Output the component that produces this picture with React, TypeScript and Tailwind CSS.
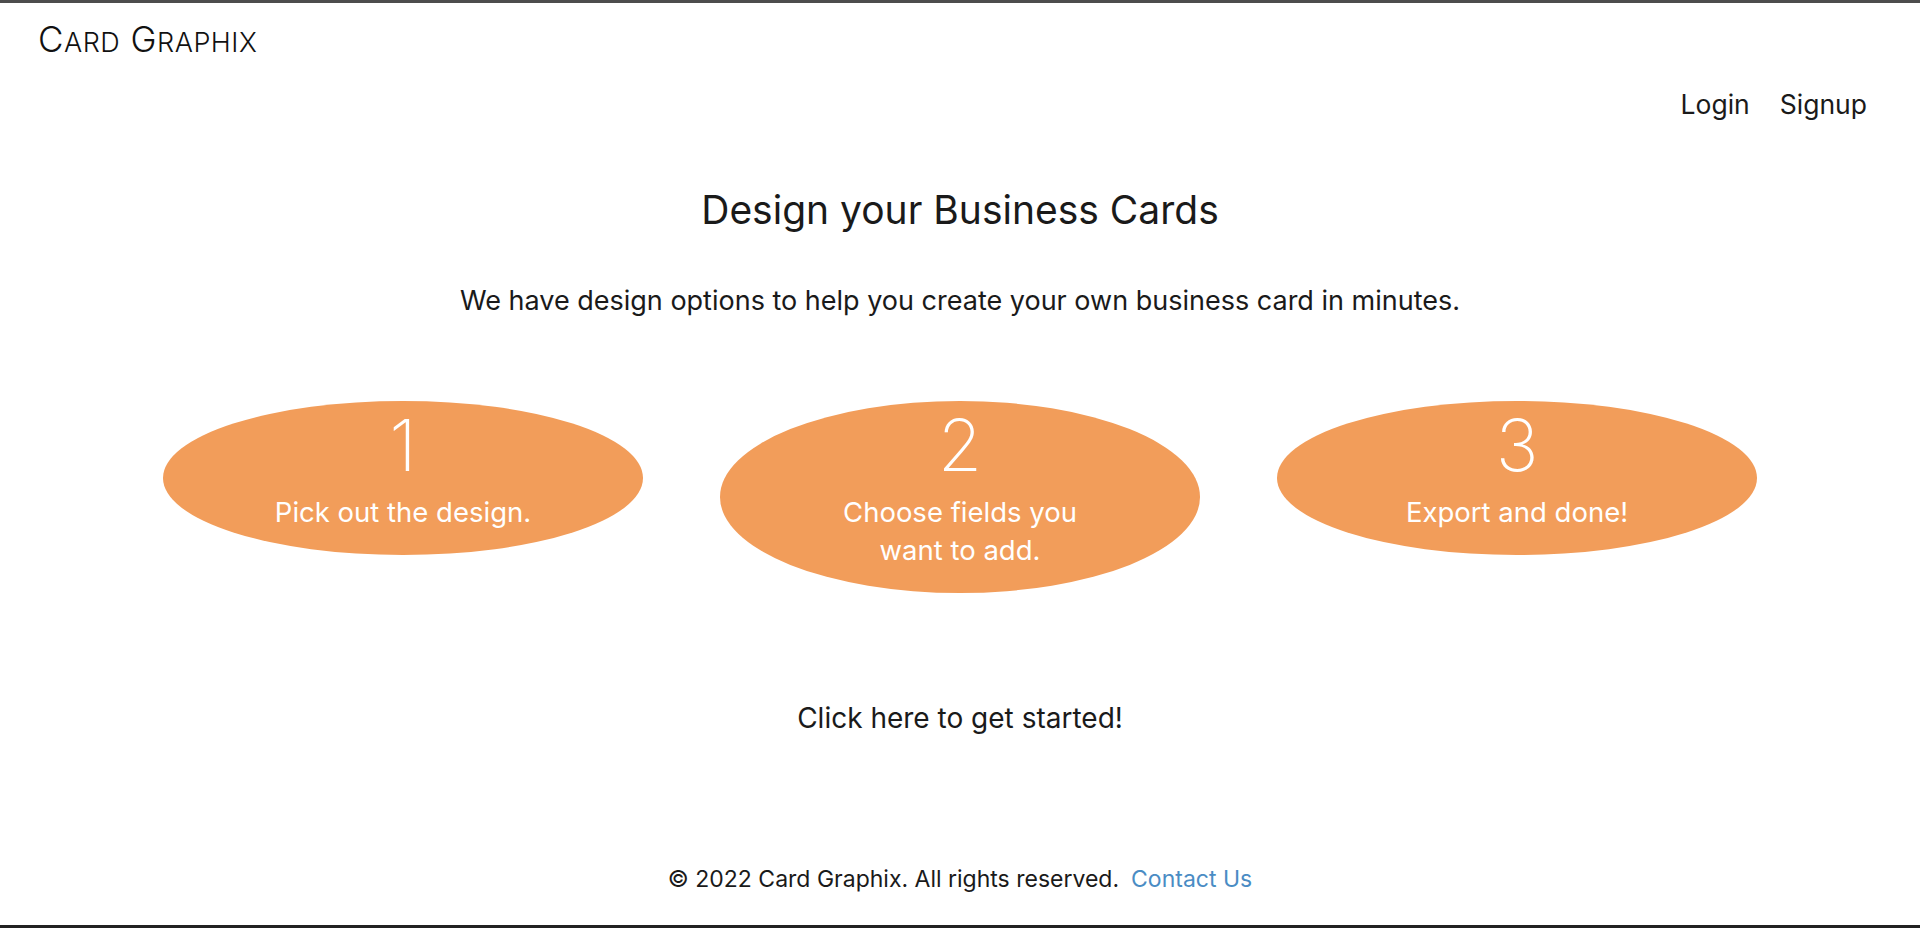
import React from 'react';

const steps = [
  { n: '1', text: ['Pick out the design.'] },
  { n: '2', text: ['Choose fields you', 'want to add.'] },
  { n: '3', text: ['Export and done!'] },
];

function App() {
  return (
    <div className="h-[928px] flex flex-col bg-white text-[#1a1a1a] border-t-[3px] border-t-[#4d4d4d] border-b-[3px] border-b-[#222] font-['Inter',sans-serif]">
      <header className="pt-[19px]">
        <div className="pl-[38px] font-light leading-none text-[#111] tracking-[0.5px]">
          <span className="text-[35px]">C</span>
          <span className="text-[27px]">ARD</span>
          <span className="text-[35px]"> G</span>
          <span className="text-[27px]">RAPHIX</span>
        </div>
        <nav className="flex justify-end gap-[30px] pr-[53px] mt-[34px] text-[26.5px] leading-none">
          <a className="cursor-pointer">Login</a>
          <a className="cursor-pointer">Signup</a>
        </nav>
      </header>

      <main className="flex flex-col items-center">
        <h1 className="mt-[72px] text-[39px] leading-none font-normal">Design your Business Cards</h1>
        <p className="mt-[58px] text-[27px] leading-none">
          We have design options to help you create your own business card in minutes.
        </p>

        <div className="mt-[87px] flex items-start gap-[77px]">
          {steps.map((s) => (
            <div
              key={s.n}
              className="w-[480px] rounded-[50%] bg-[#f29d5a] text-white flex flex-col items-center pb-[24px]"
            >
              <div className="-mt-[5px] text-[72px] font-extralight leading-[97px]">{s.n}</div>
              {s.text.map((t) => (
                <div key={t} className="text-[27.5px] leading-[38px]">{t}</div>
              ))}
            </div>
          ))}
        </div>

        <a className="mt-[111px] text-[28px] leading-none cursor-pointer">Click here to get started!</a>
      </main>

      <footer className="mt-auto mb-[34px] flex justify-center text-[23px] leading-none">
        <span>© 2022 Card Graphix. All rights reserved.</span>
        <a className="ml-3 text-[#4a8cc4] cursor-pointer">Contact Us</a>
      </footer>
    </div>
  );
}

export default App;
